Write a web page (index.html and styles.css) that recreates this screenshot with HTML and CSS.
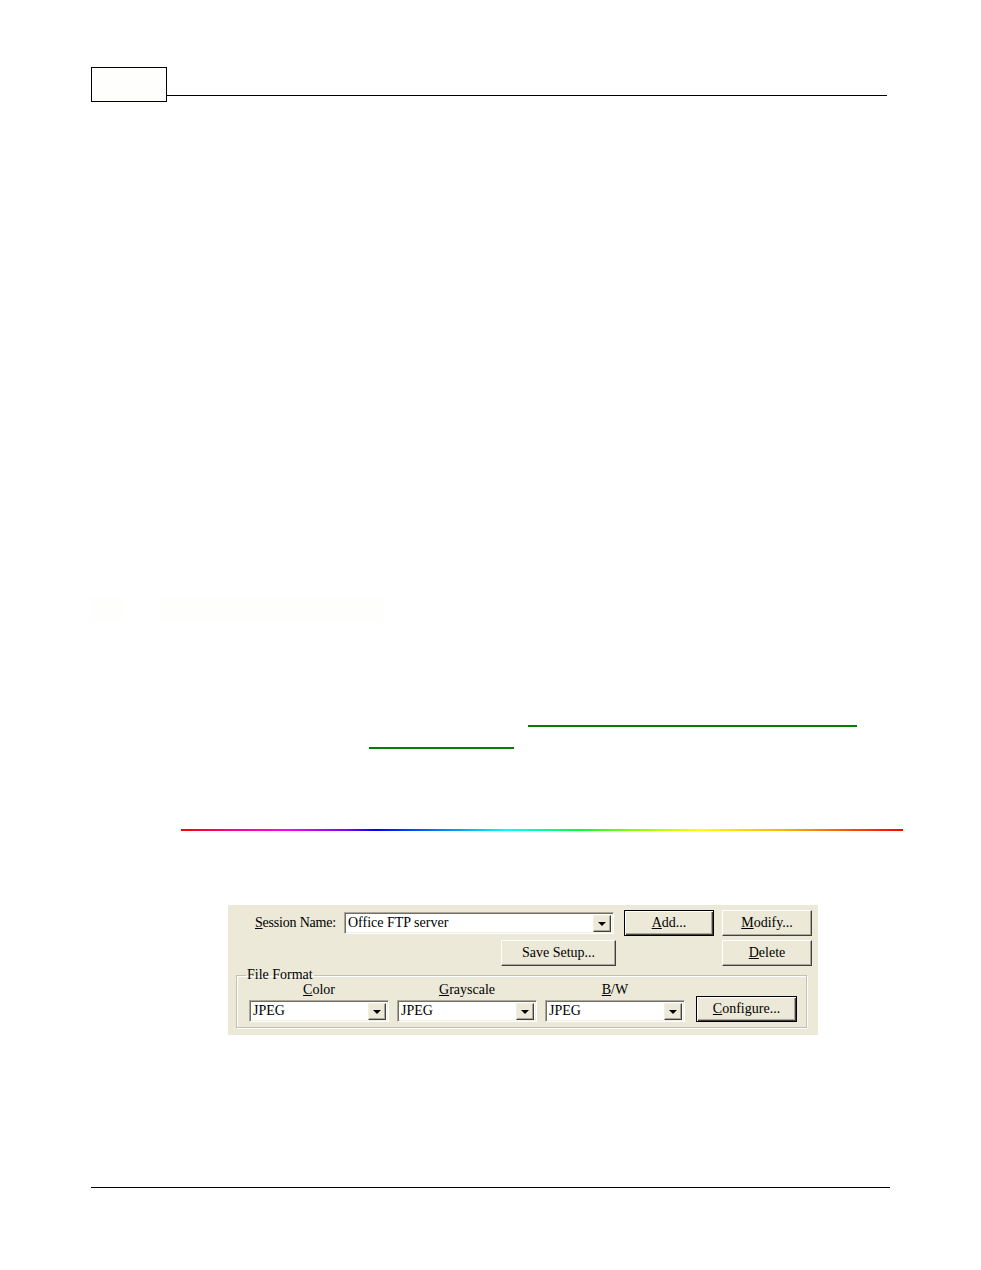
FILE: index.html
```html
<!DOCTYPE html>
<html>
<head>
<meta charset="utf-8">
<link rel="stylesheet" href="styles.css">
</head>
<body>
<div class="page">
  <header class="top">
    <div class="pagebox"></div>
    <div class="topline"></div>
  </header>

  <div class="faint-row">
    <div class="faint a"></div>
    <div class="faint b"></div>
  </div>

  <div class="link l1"></div>
  <div class="link l2"></div>

  <div class="rainbow"></div>

  <div class="dialog">
    <div class="row r1">
      <span class="label"><u>S</u>ession Name:</span>
      <div class="combo wide"><span class="val">Office FTP server</span><span class="drop"><span class="tri"></span></span></div>
      <button class="btn def w90"><u>A</u>dd...</button>
      <button class="btn w90"><u>M</u>odify...</button>
    </div>
    <div class="row r2">
      <button class="btn save">Save Setup...</button>
      <button class="btn w90 del"><u>D</u>elete</button>
    </div>
    <fieldset class="group">
      <legend>File Format</legend>
      <div class="cols">
        <div class="col">
          <span class="cap"><u>C</u>olor</span>
          <div class="combo small"><span class="val">JPEG</span><span class="drop"><span class="tri"></span></span></div>
        </div>
        <div class="col">
          <span class="cap"><u>G</u>rayscale</span>
          <div class="combo small"><span class="val">JPEG</span><span class="drop"><span class="tri"></span></span></div>
        </div>
        <div class="col">
          <span class="cap"><u>B</u>/W</span>
          <div class="combo small"><span class="val">JPEG</span><span class="drop"><span class="tri"></span></span></div>
        </div>
        <button class="btn conf"><u>C</u>onfigure...</button>
      </div>
    </fieldset>
  </div>

  <footer class="bottomline"></footer>
</div>
</body>
</html>
```

FILE: styles.css
```css
html, body {
  margin: 0;
  padding: 0;
  background: #ffffff;
}

.page {
  width: 981px;
  padding-top: 67px;
  font-family: "Liberation Serif", "Times New Roman", serif;
}

/* header */
.top {
  display: flex;
  align-items: flex-end;
  margin-left: 91px;
  width: 796px;
}
.pagebox {
  width: 74px;
  height: 33px;
  border: 1px solid #000;
  background: #fefefc;
}
.topline {
  flex: 1;
  height: 1px;
  background: #000;
  margin-bottom: 6px;
}

/* faint blocks */
.faint-row {
  display: flex;
  margin-top: 495px;
  margin-left: 90px;
  height: 25px;
  gap: 37px;
}
.faint { background: #fefefc; height: 25px; }
.faint.a { width: 33px; }
.faint.b { width: 223px; }

/* green link underlines */
.link {
  height: 0;
  border-bottom: 2px solid #008000;
}
.l1 { margin-top: 103px; margin-left: 528px; width: 329px; }
.l2 { margin-top: 20px; margin-left: 369px; width: 145px; }

/* rainbow */
.rainbow {
  margin-top: 80px;
  margin-left: 181px;
  width: 722px;
  height: 2px;
  background: linear-gradient(to right,
    #ff0000 0%, #ff00a0 8%, #ff00ff 15%, #8000ff 23%, #0000ff 27%,
    #0080ff 36%, #00ffff 45%, #00ff40 55%, #80ff00 62%, #ffff00 72%,
    #ffb000 84%, #ff4000 94%, #ff0000 100%);
}

/* dialog */
.dialog {
  margin-top: 74px;
  margin-left: 228px;
  width: 590px;
  height: 130px;
  box-sizing: border-box;
  background: #ece9d8;
  padding-top: 5px;
  font-size: 14px;
  color: #000;
}
.row {
  display: flex;
  align-items: center;
}
.r1 .label {
  width: 108px;
  text-align: right;
  margin-right: 8px;
  letter-spacing: -0.2px;
}
.r1 .combo.wide { width: 270px; margin-right: 10px; }
.r1 .def { margin-right: 8px; }
.r2 { margin-top: 4px; }
.r2 .save { margin-left: 273px; width: 115px; }
.r2 .del { margin-left: 106px; }

.btn {
  box-sizing: border-box;
  height: 26px;
  padding: 0;
  font-family: "Liberation Serif", "Times New Roman", serif;
  font-size: 14px;
  color: #000;
  background: #ece9d8;
  border: 1px solid;
  border-color: #ffffff #404040 #404040 #ffffff;
  box-shadow: inset -1px -1px 0 #aca899;
}
.btn.def {
  border: 1px solid #000;
  box-shadow: inset 1px 1px 0 #fff, inset -1px -1px 0 #404040, inset -2px -2px 0 #aca899;
}
.w90 { width: 90px; }

.combo {
  box-sizing: border-box;
  height: 22px;
  display: flex;
  align-items: center;
  background: #fff;
  border: 1px solid;
  border-color: #aca899 #fff #fff #aca899;
  box-shadow: inset 1px 1px 0 #716f64, inset -1px -1px 0 #f1efe2;
  padding: 2px 2px 2px 3px;
}
.combo .val {
  flex: 1;
  white-space: nowrap;
  line-height: 16px;
}
.combo .drop {
  box-sizing: border-box;
  width: 18px;
  height: 17px;
  background: #ece9d8;
  border: 1px solid;
  border-color: #f1efe2 #404040 #404040 #f1efe2;
  box-shadow: inset -1px -1px 0 #aca899;
  display: flex;
  align-items: center;
  justify-content: center;
}
.tri {
  width: 0;
  height: 0;
  border-left: 4px solid transparent;
  border-right: 4px solid transparent;
  border-top: 4px solid #000;
  margin-top: 1px;
}

.group {
  box-sizing: border-box;
  margin: 2px 0 0 8px;
  width: 571px;
  padding: 0 0 5px 12px;
  border: 1px solid #c3c0b0;
  box-shadow: 1px 1px 0 #fff, inset 1px 1px 0 #fff;
  min-width: 0;
}
.group legend {
  padding: 0 1px;
  margin-left: -3px;
  line-height: 14px;
  font-size: 14px;
}
.cols {
  display: flex;
  align-items: flex-end;
  gap: 8px;
}
.col {
  width: 140px;
  display: flex;
  flex-direction: column;
  align-items: center;
}
.cap {
  line-height: 15px;
  margin-bottom: 3px;
}
.combo.small { width: 140px; }
.btn.conf {
  margin-left: 3px;
  width: 101px;
  border: 1px solid #000;
  box-shadow: inset 1px 1px 0 #fff, inset -1px -1px 0 #404040, inset -2px -2px 0 #aca899;
}

/* footer */
.bottomline {
  margin-top: 152px;
  margin-left: 91px;
  width: 799px;
  height: 1px;
  background: #000;
}
```
